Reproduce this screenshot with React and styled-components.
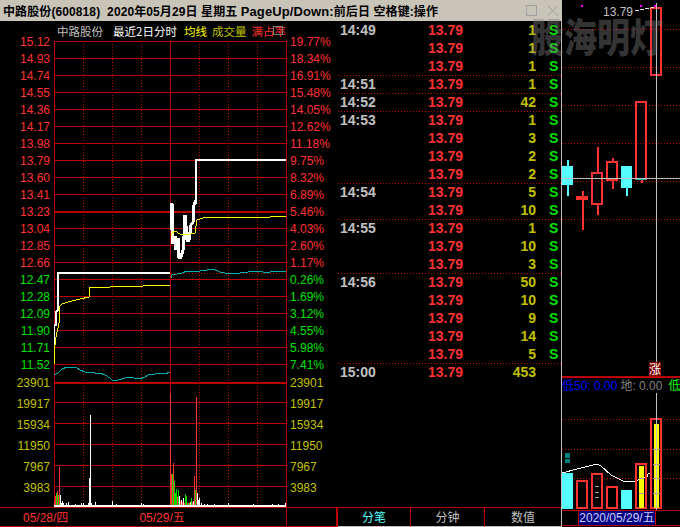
import styled, { createGlobalStyle } from 'styled-components'

const RED = '#ff3232'
const GREEN = '#00e000'
const OLIVE = '#c0c000'
const GRID = '#bb0000'

const GlobalStyle = createGlobalStyle`
  html, body {
    margin: 0;
    background: #000;
  }
  body {
    font-family: "Liberation Sans", "Noto Sans CJK SC", sans-serif;
    overflow: hidden;
  }
`

const prices = [
  ['15.12', RED], ['14.93', RED], ['14.74', RED], ['14.55', RED], ['14.36', RED],
  ['14.17', RED], ['13.98', RED], ['13.79', RED], ['13.60', RED], ['13.41', RED],
  ['13.23', RED], ['13.04', RED], ['12.85', RED], ['12.66', RED], ['12.47', GREEN],
  ['12.28', GREEN], ['12.09', GREEN], ['11.90', GREEN], ['11.71', GREEN], ['11.52', GREEN],
]
const percents = [
  ['19.77%', RED], ['18.34%', RED], ['16.91%', RED], ['15.48%', RED], ['14.05%', RED],
  ['12.62%', RED], ['11.18%', RED], ['9.75%', RED], ['8.32%', RED], ['6.89%', RED],
  ['5.46%', RED], ['4.03%', RED], ['2.60%', RED], ['1.17%', RED], ['0.26%', GREEN],
  ['1.69%', GREEN], ['3.12%', GREEN], ['4.55%', GREEN], ['5.98%', GREEN], ['7.41%', GREEN],
]
const volumes = ['23901', '19917', '15934', '11950', '7967', '3983']

const ticks = [
  ['14:49', 1], ['', 1], ['', 1], ['14:51', 1], ['14:52', 42], ['14:53', 1], ['', 3], ['', 2], ['', 2],
  ['14:54', 5], ['', 10], ['14:55', 1], ['', 10], ['', 3], ['14:56', 50], ['', 10], ['', 9], ['', 14], ['', 5],
  ['15:00', 453],
]

const hLines = Array.from({ length: 20 }, (_, i) => 41 + i * 17)
const volLines = [402, 423, 444, 465, 486]
const dotted = [83, 112, 141, 199, 228, 257]

const priceDay1 = '54,362 54,325 56,325 56,312 58,310 58,273 170,273'
const avgDay1 = '54,364 55,345 56,337 59,323 59,307 62,304 68,302 80,299 89,297 90,287 110,287 111,286 143,286 144,285 170,285'
const priceSpikes = '171,230 172,203 173,244 175,236 176,250 178,238 179,257 181,257 183,250 184,236 185,215 186,226 187,240 189,240 191,225 193,222 194,205 196,200'
const priceDay2 = '196,204 196,160 286,160'
const avgDay2 = '171,236 172,233 175,231 180,234 186,235 195,233 197,220 203,218 213,217 270,217 271,216 286,216'
const tealDay1 = '54,375 58,373 62,369 67,367 72,368 76,367 80,370 85,372 90,372 95,373 100,373 105,375 110,378 113,381 118,380 122,379 128,377 134,378 140,379 145,377 150,374 155,374 160,373 165,374 170,372'
const tealDay2 = '171,278 172,275 177,274 182,273 187,271 193,272 200,271 207,270 213,269 220,272 225,273 230,274 235,273 240,273 248,272 255,271 263,272 270,272 278,271 286,271'

const volBars = [
  [54, 501, RED], [55, 496, RED], [56, 493, GREEN], [57, 491, RED], [58, 495, GREEN], [59, 467, RED], [60, 495, '#fff'],
  [61, 503, '#fff'], [62, 501, '#fff'], [63, 503, '#fff'], [66, 503, '#fff'], [68, 502, '#fff'], [75, 504, '#fff'],
  [81, 503, '#fff'], [83, 503, '#fff'], [88, 503, '#fff'], [89, 478, '#fff'], [90, 415, '#fff'], [91, 503, '#fff'],
  [95, 502, '#fff'], [112, 501, '#fff'], [116, 504, '#fff'], [141, 503, '#fff'], [143, 504, '#fff'],
  [170, 393, RED], [171, 474, RED], [172, 474, GREEN], [173, 463, RED], [174, 481, GREEN], [175, 493, GREEN], [176, 489, GREEN],
  [177, 497, RED], [178, 490, GREEN], [179, 496, '#fff'], [180, 501, RED], [181, 500, '#fff'], [182, 502, RED], [183, 498, '#fff'],
  [184, 503, RED], [185, 494, GREEN], [186, 496, GREEN], [187, 503, RED], [188, 503, GREEN], [189, 503, RED], [190, 502, '#fff'],
  [191, 498, GREEN], [192, 502, RED], [193, 501, '#fff'], [194, 476, RED], [195, 490, GREEN], [196, 397, RED], [197, 493, '#fff'],
  [198, 500, '#fff'], [199, 498, '#fff'], [201, 503, '#fff'], [204, 504, '#fff'], [207, 504, '#fff'], [214, 504, '#fff'], [228, 503, '#fff'],
  [253, 504, '#fff'], [272, 504, '#fff'], [278, 504, '#fff'], [285, 503, '#fff'],
]

const candles = [
  { x: 562, w: 11, top: 166, bottom: 185, hi: 160, lo: 196, up: false },
  { x: 577, w: 10, top: 197, bottom: 199, hi: 191, lo: 230, up: true },
  { x: 592, w: 10, top: 173, bottom: 204, hi: 147, lo: 215, up: true },
  { x: 607, w: 10, top: 162, bottom: 180, hi: 158, lo: 189, up: true },
  { x: 621, w: 11, top: 166, bottom: 188, hi: 166, lo: 196, up: false },
  { x: 636, w: 10, top: 102, bottom: 179, hi: 102, lo: 183, up: true },
  { x: 651, w: 10, top: 8, bottom: 75, hi: 8, lo: 75, up: true },
]

const lowerBars = [
  { x: 562, w: 11, top: 473, up: false },
  { x: 577, w: 10, top: 481, up: true },
  { x: 592, w: 10, top: 474, up: true, marks: [486, 492, 497], markX: [595, 599] },
  { x: 607, w: 10, top: 487, up: true },
  { x: 621, w: 11, top: 490, up: false },
  { x: 636, w: 10, top: 464, up: true, fill: [639, 5, 466], marks: [478, 493], markX: [639, 644] },
  { x: 651, w: 10, top: 419, up: true, fill: [654, 5, 424], marks: [449, 464, 478, 493], markX: [653, 660] },
]

const Page = styled.div`
  position: relative;
  display: grid;
  grid-template-columns: 562px 118px;
  width: 680px;
  height: 527px;
  overflow: hidden;
  background: #000;
`

const LeftSide = styled.div`
  display: flex;
  flex-direction: column;
`

const TitleBar = styled.div`
  height: 21px;
  background: #c8c4b8;
  color: #000;
  display: flex;
  align-items: center;
  padding-left: 3px;
  font-size: 12px;
  font-weight: 700;
  letter-spacing: 0.1px;
  white-space: pre;
`

const TitleLatin = styled.span`
  font-size: 13px;
`

const WindowButtons = styled.div`
  margin-left: auto;
  margin-right: 3px;
  display: flex;
  gap: 9px;
  align-items: center;
`

const Body = styled.div`
  display: flex;
  height: 506px;
`

const ChartPanel = styled.div`
  width: 338px;
  flex: none;
`

const ChartHeader = styled.div`
  position: relative;
  height: 20px;
  margin-left: 57px;
  width: 229px;
  display: flex;
  align-items: center;
  overflow: hidden;
  font-size: 11.5px;
  font-family: "Noto Sans CJK SC", sans-serif;
  white-space: nowrap;
`

const Legend = styled.span`
  color: ${p => p.$color};
  margin-left: ${p => p.$gap || 0}px;
`

const HeaderIcon = styled.span`
  position: absolute;
  right: 3px;
  top: 5px;
  width: 8px;
  height: 7px;
  border: 1px solid #808080;
`

const ChartRow = styled.div`
  display: grid;
  grid-template-columns: 54px 233px 51px;
  height: 466px;
`

const Axis = styled.div`
  margin-top: -7px;
  font-size: 12px;
  text-align: ${p => p.$side === 'left' ? 'right' : 'left'};
  padding: ${p => p.$side === 'left' ? '0 4px 0 0' : '0 0 0 3px'};
`

const AxisCell = styled.div`
  height: ${p => p.$h}px;
  line-height: ${p => p.$h}px;
  color: ${p => p.$color};
`

const VolumeAxis = styled.div`
  margin-top: -1px;
`

const ChartSvg = styled.svg`
  display: block;
`

const DateFooter = styled.div`
  height: 18px;
  display: grid;
  grid-template-columns: 287px 51px;
  border-top: 1px solid ${GRID};
  border-bottom: 1px solid ${GRID};
`

const DateAxis = styled.div`
  display: flex;
  align-items: center;
  padding-bottom: 4px;
  border-right: 1px solid ${GRID};
  box-sizing: border-box;
  color: ${RED};
  font-size: 12px;
`

const DateLabel = styled.span`
  margin-left: ${p => p.$gap}px;
`

const FooterEnd = styled.div`
  border-right: 2px solid ${GRID};
`

const TickPanel = styled.div`
  width: 224px;
  flex: none;
  box-sizing: border-box;
  border-right: 1px solid #c0c0c0;
  border-bottom: 1px solid #c0c0c0;
  display: flex;
  flex-direction: column;
`

const TickList = styled.div`
  flex: 1;
`

const TickRow = styled.div`
  height: 18px;
  box-sizing: border-box;
  padding: 0 0 1px 2px;
  display: grid;
  grid-template-columns: 88px 42px 66px 1fr;
  align-items: center;
  font-size: 14px;
  font-weight: 700;
  background: ${p => p.$split
    ? `repeating-linear-gradient(90deg, ${GRID} 0 1px, transparent 1px 3px) top / 100% 1px no-repeat`
    : 'none'};
`

const TickTime = styled.span`
  color: #c0c0c0;
`

const TickPrice = styled.span`
  color: ${RED};
`

const TickVolume = styled.span`
  color: ${OLIVE};
  text-align: right;
`

const TickSide = styled.span`
  color: ${GREEN};
  padding-left: 13px;
`

const Tabs = styled.div`
  height: 18px;
  display: grid;
  grid-template-columns: 73px 74px 1fr;
  border-top: 1px solid ${GRID};
`

const Tab = styled.div`
  display: flex;
  align-items: center;
  justify-content: center;
  padding-bottom: 4px;
  font-size: 12px;
  font-family: "Noto Sans CJK SC", sans-serif;
  color: ${p => p.$active ? '#55ffff' : '#c0c0c0'};
  border-right: ${p => p.$last ? 'none' : `1px solid ${GRID}`};
`

const KPanel = styled.div`
  display: flex;
  flex-direction: column;
  height: 527px;
`

const IndicatorRow = styled.div`
  height: 17px;
  display: flex;
  align-items: center;
  padding-bottom: 3px;
  border-top: 2px solid ${GRID};
  box-sizing: border-box;
  overflow: hidden;
  font-size: 12px;
  white-space: pre;
  background: #000;
`

const Indicator = styled.span`
  color: ${p => p.$color};
  margin-left: ${p => p.$gap}px;
  flex: none;
`

const LimitTag = styled.span`
  position: absolute;
  left: 649px;
  top: 362px;
  width: 12px;
  height: 14px;
  background: #800000;
  color: #fff;
  font-size: 12px;
  line-height: 14px;
  font-family: "Noto Sans CJK SC", sans-serif;
  text-align: center;
`

const KPriceTag = styled.span`
  position: absolute;
  left: 603px;
  top: 5px;
  color: #c0c0c0;
  font-size: 12px;
  line-height: 15px;
`

const KDateRow = styled.div`
  height: 16px;
  box-sizing: border-box;
  border-top: 1px solid ${GRID};
  border-bottom: 1px solid ${GRID};
  padding-left: 16px;
`

const KDate = styled.span`
  display: block;
  width: 78px;
  height: 14px;
  box-sizing: border-box;
  background: #000080;
  border-left: 1px solid ${GRID};
  border-right: 1px solid ${GRID};
  color: #d0d0ff;
  font-size: 12px;
  line-height: 14px;
  text-align: center;
  white-space: nowrap;
`

const Watermark = styled.div`
  position: absolute;
  left: 531px;
  top: 11px;
  font-family: "Noto Sans CJK SC", sans-serif;
  font-weight: 900;
  font-size: 33px;
  line-height: 48px;
  color: rgba(128, 128, 128, 0.42);
  white-space: nowrap;
  pointer-events: none;
  transform: scaleY(1.2);
`

const MainChart = () => (
  <ChartSvg width="233" height="466" viewBox="54 41 233 466">
    <g shapeRendering="crispEdges" fill="none">
      {hLines.map(y => <line key={y} x1="54" x2="287" y1={y + 0.5} y2={y + 0.5} stroke={GRID} />)}
      <rect x="54" y="211" width="233" height="2" fill={GRID} />
      <rect x="54" y="382" width="233" height="2" fill={GRID} />
      {volLines.map(y => <line key={y} x1="54" x2="287" y1={y + 0.5} y2={y + 0.5} stroke={GRID} />)}
      {dotted.map(x => <line key={x} x1={x + 0.5} x2={x + 0.5} y1="41" y2="507" stroke={GRID} strokeDasharray="1 2" />)}
      <line x1="171" x2="287" y1="273.5" y2="273.5" stroke={GRID} strokeDasharray="1 2" />
      {[54, 170, 286].map(x => <line key={x} x1={x + 0.5} x2={x + 0.5} y1="41" y2="507" stroke={GRID} />)}

      {volBars.map(([x, top, color]) => (
        <rect key={x} x={x} y={top} width="1" height={507 - top} fill={color} />
      ))}
      <rect x="54" y="505" width="232" height="2" fill="#fff" />

      <polyline points={tealDay1} stroke="#00b0b0" />
      <polyline points={tealDay2} stroke="#00b0b0" />
      <polyline points={priceDay1} stroke="#fff" strokeWidth="2" />
      <polyline points={priceSpikes} stroke="#fff" strokeWidth="3" />
      <polyline points={priceDay2} stroke="#fff" strokeWidth="2" />
      <polyline points={avgDay1} stroke="#ffff00" />
      <polyline points={avgDay2} stroke="#ffff00" />
    </g>
  </ChartSvg>
)

const Candle = ({ x, w, top, bottom, hi, lo, up }) => {
  const mid = x + Math.floor(w / 2)
  if (!up) {
    return (
      <g>
        <rect x={mid} y={hi} width="2" height={lo - hi} fill="#55ffff" />
        <rect x={x} y={top} width={w} height={bottom - top} fill="#55ffff" />
      </g>
    )
  }
  return (
    <g>
      <rect x={mid} y={hi} width="2" height={top - hi} fill={RED} />
      <rect x={mid} y={bottom} width="2" height={lo - bottom} fill={RED} />
      <rect x={x} y={top} width={w} height={bottom - top} fill="none" stroke={RED} strokeWidth="2" />
    </g>
  )
}

const UpperKChart = () => (
  <ChartSvg width="118" height="376" viewBox="562 0 118 376">
    <g shapeRendering="crispEdges">
      {[29, 67, 105, 143, 181, 219].map(y => (
        <line key={y} x1="562" x2="680" y1={y + 0.5} y2={y + 0.5} stroke={GRID} strokeDasharray="1 2" />
      ))}
      {candles.map(c => <Candle key={c.x} {...c} />)}
      <rect x="656" y="75" width="1" height="19" fill="#00d0d0" />
      <rect x="636" y="178" width="10" height="2" fill="#00b0b0" />
      <rect x="581" y="5" width="2" height="2" fill="#ff00ff" />
      <rect x="640" y="5" width="2" height="2" fill="#ff00ff" />
      <rect x="654" y="5" width="2" height="2" fill="#ff00ff" />
      <polyline points="635,11 640,10 645,9 651,8 654,7" fill="none" stroke="#e0e0e0" strokeDasharray="4 1" />
      <line x1="562" x2="680" y1="178.5" y2="178.5" stroke="#c0c0c0" />
      <line x1="656.5" x2="656.5" y1="3" y2="376" stroke="#c0c0c0" />
    </g>
  </ChartSvg>
)

const VolumeBar = ({ x, w, top, up, fill, marks, markX }) => (
  <g>
    {up
      ? <rect x={x} y={top} width={w} height={508 - top} fill="none" stroke={RED} strokeWidth="2" />
      : <rect x={x} y={top} width={w} height={509 - top} fill="#55ffff" />}
    {fill && <rect x={fill[0]} y={fill[2]} width={fill[1]} height={508 - fill[2]} fill="#ffff00" />}
    {marks && marks.map(y => (
      <line key={y} x1={markX[0]} x2={markX[1]} y1={y + 0.5} y2={y + 0.5} stroke="#a0a0a0" />
    ))}
  </g>
)

const LowerKChart = () => (
  <ChartSvg width="118" height="117" viewBox="562 393 118 117">
    <g shapeRendering="crispEdges">
      {[419, 449, 478].map(y => (
        <line key={y} x1="562" x2="680" y1={y + 0.5} y2={y + 0.5} stroke={GRID} strokeDasharray="1 2" />
      ))}
      <rect x="565" y="453" width="5" height="5" fill="#008080" />
      <rect x="565" y="459" width="5" height="4" fill="#008080" />
      <polyline
        points="562,473 577,469 597,464 601,466 611,475 625,482 635,481 647,477 648,474 652,473"
        fill="none"
        stroke="#fff"
      />
      {lowerBars.map(b => <VolumeBar key={b.x} {...b} />)}
      <line x1="656.5" x2="656.5" y1="393" y2="510" stroke="#c0c0c0" />
    </g>
  </ChartSvg>
)

const App = () => (
  <Page>
    <GlobalStyle />
    <LeftSide>
      <TitleBar>
        <span>中路股份(600818)  2020年05月29日 星期五 <TitleLatin>PageUp/Down:</TitleLatin>前后日 空格键:操作</span>
        <WindowButtons>
          <svg width="12" height="12" viewBox="0 0 12 12">
            <rect x="0.5" y="0.5" width="10" height="10" fill="none" stroke="#a0a0a0" />
          </svg>
          <svg width="12" height="12" viewBox="0 0 12 12">
            <path d="M0.5 0.5 L11 11 M11 0.5 L0.5 11" fill="none" stroke="#a0a0a0" />
          </svg>
        </WindowButtons>
      </TitleBar>
      <Body>
        <ChartPanel>
          <ChartHeader>
            <Legend $color="#c0c0c0">中路股份</Legend>
            <Legend $color="#fff" $gap={10}>最近2日分时</Legend>
            <Legend $color="#ffff00" $gap={7}>均线</Legend>
            <Legend $color={OLIVE} $gap={5}>成交量</Legend>
            <Legend $color={RED} $gap={5}>满占率</Legend>
            <HeaderIcon />
          </ChartHeader>
          <ChartRow>
            <Axis $side="left">
              {prices.map(([v, c]) => <AxisCell key={v} $h={17} $color={c}>{v}</AxisCell>)}
              <VolumeAxis>
                {volumes.map(v => <AxisCell key={v} $h={21} $color={OLIVE}>{v}</AxisCell>)}
              </VolumeAxis>
            </Axis>
            <MainChart />
            <Axis $side="right">
              {percents.map(([v, c]) => <AxisCell key={v} $h={17} $color={c}>{v}</AxisCell>)}
              <VolumeAxis>
                {volumes.map(v => <AxisCell key={v} $h={21} $color={OLIVE}>{v}</AxisCell>)}
              </VolumeAxis>
            </Axis>
          </ChartRow>
          <DateFooter>
            <DateAxis>
              <DateLabel $gap={23}>05/28/四</DateLabel>
              <DateLabel $gap={71}>05/29/五</DateLabel>
            </DateAxis>
            <FooterEnd />
          </DateFooter>
        </ChartPanel>
        <TickPanel>
          <TickList>
            {ticks.map(([time, vol], i) => (
              <TickRow key={i} $split={time && i > 0}>
                <TickTime>{time}</TickTime>
                <TickPrice>13.79</TickPrice>
                <TickVolume>{vol}</TickVolume>
                <TickSide>{time === '15:00' ? '' : 'S'}</TickSide>
              </TickRow>
            ))}
          </TickList>
          <Tabs>
            <Tab $active>分笔</Tab>
            <Tab>分钟</Tab>
            <Tab $last>数值</Tab>
          </Tabs>
        </TickPanel>
      </Body>
    </LeftSide>
    <KPanel>
      <UpperKChart />
      <IndicatorRow>
        <Indicator $color="#0000ff" $gap={0}>低50: 0.00</Indicator>
        <Indicator $color="#808080" $gap={3}>地: 0.00</Indicator>
        <Indicator $color="#00ff00" $gap={6}>低</Indicator>
      </IndicatorRow>
      <LowerKChart />
      <KDateRow>
        <KDate>2020/05/29/五</KDate>
      </KDateRow>
    </KPanel>
    <KPriceTag>13.79</KPriceTag>
    <LimitTag>涨</LimitTag>
    <Watermark>股海明灯</Watermark>
  </Page>
)

export default App
